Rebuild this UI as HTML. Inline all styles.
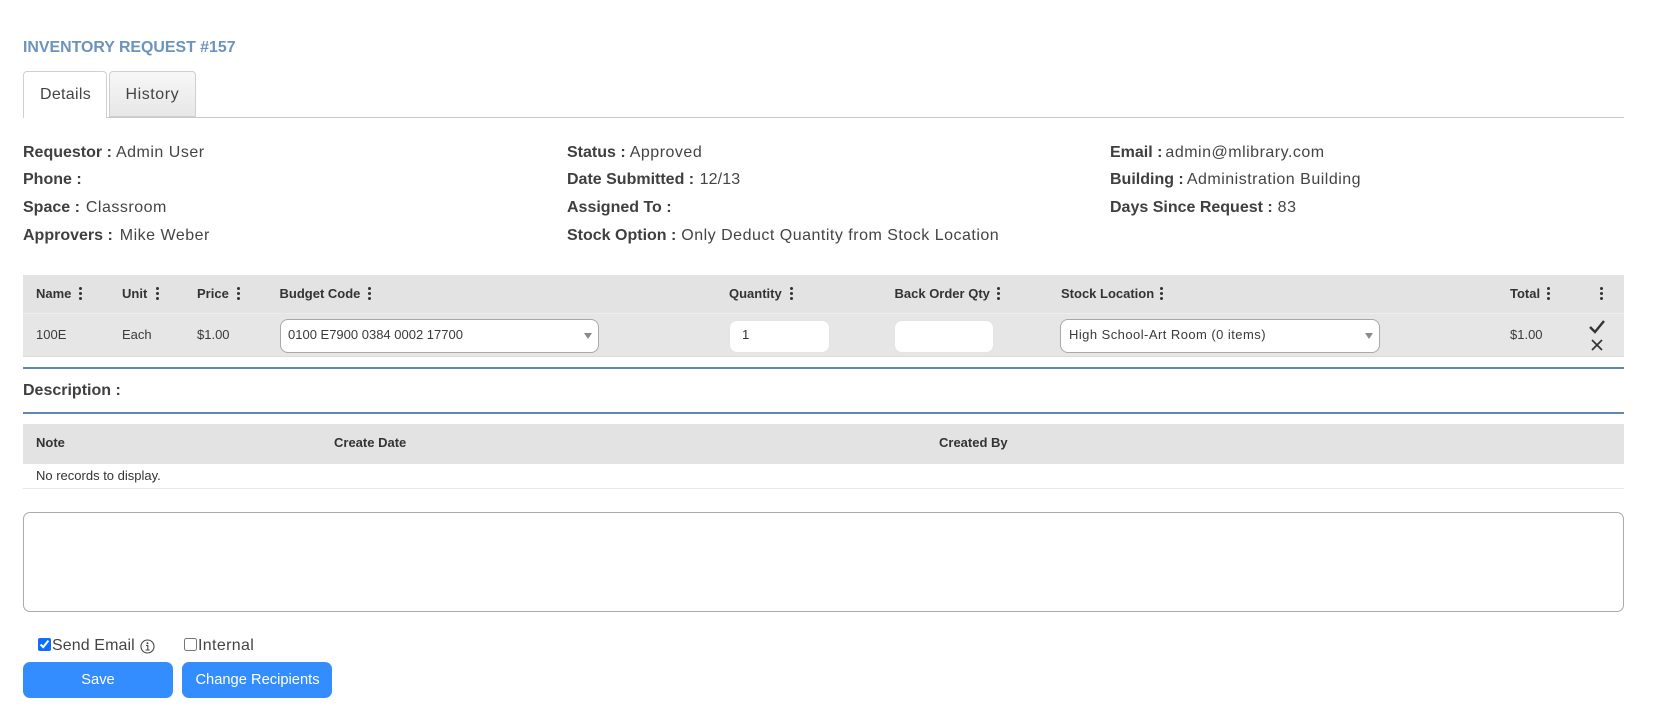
<!DOCTYPE html>
<html><head><meta charset="utf-8"><title>Inventory Request</title>
<style>
html,body{margin:0;padding:0;background:#fff;width:1654px;height:706px;overflow:hidden}
body{font-family:"Liberation Sans",sans-serif;color:#444;position:relative}
.a{position:absolute;white-space:nowrap}
.t{font-size:16px;line-height:20px;letter-spacing:.5px}
.t b{color:#3f3f3f;letter-spacing:0}
.h{font-size:13px;line-height:16px;font-weight:bold;color:#333}
.c{font-size:13px;line-height:16px;color:#3a3a3a}
.box{position:absolute;box-sizing:border-box;background:#fff}
.sel{border:1px solid #a8a8a8;border-radius:8px;height:34px;top:319px}
.inp{border:1px solid #e4e4e4;border-radius:8px;height:33px;top:320px}
.arrow{position:absolute;width:0;height:0;border-left:4px solid transparent;border-right:4px solid transparent;border-top:6px solid #8a8a8a;top:333px}
.dots{position:absolute;top:287px}
.dots i{display:block;width:3px;height:3px;border-radius:50%;background:#333;margin-bottom:2px}
.btn{position:absolute;top:662px;height:36px;background:#338dff;border-radius:7px;color:#fff;font-size:14.7px;line-height:36px;text-align:center}
</style></head><body>
<div class="a" style="left:23px;top:38px;font-size:15.9px;line-height:20px;font-weight:bold;color:#6a93bd">INVENTORY REQUEST #157</div>

<div class="box" style="left:23px;top:71px;width:84px;height:47px;border:1px solid #cfcfcf;border-bottom:0;border-radius:4px 4px 0 0;z-index:2"></div>
<div class="box" style="left:109px;top:71px;width:87px;height:46px;border:1px solid #cfcfcf;border-radius:4px 4px 0 0;background:linear-gradient(#f7f7f7,#e7e7e7)"></div>
<div class="a t" style="left:40px;top:85px;z-index:3;color:#444;letter-spacing:.3px">Details</div>
<div class="a t" style="left:125.5px;top:85px;color:#444;letter-spacing:.55px">History</div>
<div class="box" style="left:23px;top:117px;width:1601px;height:1px;background:#c9c9c9"></div>

<div class="a t" style="left:23px;top:143px"><b>Requestor :</b> Admin User</div>
<div class="a t" style="left:23px;top:170px"><b>Phone :</b></div>
<div class="a t" style="left:23px;top:198px"><b>Space :</b><span style="margin-left:1px"> Classroom</span></div>
<div class="a t" style="left:23px;top:226px"><b>Approvers :</b><span style="margin-left:7px">Mike Weber</span></div>
<div class="a t" style="left:567px;top:143px"><b>Status :</b> Approved</div>
<div class="a t" style="left:567px;top:170px"><b>Date Submitted :</b><span style="margin-left:1px;letter-spacing:.1px"> 12/13</span></div>
<div class="a t" style="left:567px;top:198px"><b>Assigned To :</b></div>
<div class="a t" style="left:567px;top:226px"><b>Stock Option :</b> Only Deduct Quantity from Stock Location</div>
<div class="a t" style="left:1110px;top:143px"><b>Email :</b><span style="margin-left:-2px"> admin@mlibrary.com</span></div>
<div class="a t" style="left:1110px;top:170px"><b>Building :</b><span style="margin-left:-1px"> Administration Building</span></div>
<div class="a t" style="left:1110px;top:198px"><b>Days Since Request :</b> 83</div>

<div class="box" style="left:23px;top:275px;width:1601px;height:38px;background:#e3e3e3"></div>
<div class="box" style="left:23px;top:313px;width:1601px;height:44px;background:#e6e6e6;border-top:1px solid #ececec;border-bottom:1px solid #dcdcdc"></div>

<div class="a h" style="left:36px;top:286px">Name</div><div class="dots" style="left:79px"><i></i><i></i><i></i></div>
<div class="a h" style="left:122px;top:286px">Unit</div><div class="dots" style="left:156px"><i></i><i></i><i></i></div>
<div class="a h" style="left:197px;top:286px">Price</div><div class="dots" style="left:237px"><i></i><i></i><i></i></div>
<div class="a h" style="left:279.5px;top:286px">Budget Code</div><div class="dots" style="left:368px"><i></i><i></i><i></i></div>
<div class="a h" style="left:729px;top:286px">Quantity</div><div class="dots" style="left:790px"><i></i><i></i><i></i></div>
<div class="a h" style="left:894.5px;top:286px">Back Order Qty</div><div class="dots" style="left:997px"><i></i><i></i><i></i></div>
<div class="a h" style="left:1061px;top:286px">Stock Location</div><div class="dots" style="left:1160px"><i></i><i></i><i></i></div>
<div class="a h" style="left:1510px;top:286px">Total</div><div class="dots" style="left:1547px"><i></i><i></i><i></i></div>
<div class="dots" style="left:1600px"><i></i><i></i><i></i></div>

<div class="a c" style="left:36px;top:327px">100E</div>
<div class="a c" style="left:122px;top:327px">Each</div>
<div class="a c" style="left:197px;top:327px">$1.00</div>
<div class="box sel" style="left:280px;width:319px"></div>
<div class="a c" style="left:288px;top:327px">0100 E7900 0384 0002 17700</div>
<div class="arrow" style="left:584px"></div>
<div class="box inp" style="left:729px;width:101px"></div>
<div class="a c" style="left:742px;top:327px;color:#333">1</div>
<div class="box inp" style="left:894px;width:100px"></div>
<div class="box sel" style="left:1060px;width:320px"></div>
<div class="a c" style="left:1069px;top:327px;letter-spacing:.45px">High School-Art Room (0 items)</div>
<div class="arrow" style="left:1365px"></div>
<div class="a c" style="left:1510px;top:327px">$1.00</div>
<svg class="a" style="left:1587px;top:318px" width="20" height="34" viewBox="0 0 20 34">
<path d="M3 9 L8 14 L17 3" fill="none" stroke="#333" stroke-width="2.4"/>
<path d="M5 22 L15 32 M15 22 L5 32" fill="none" stroke="#333" stroke-width="1.7"/>
</svg>

<div class="box" style="left:23px;top:367px;width:1601px;height:2px;background:#5f88b3"></div>
<div class="a t" style="left:23px;top:381px"><b>Description :</b></div>
<div class="box" style="left:23px;top:412px;width:1601px;height:2px;background:#5f88b3"></div>

<div class="box" style="left:23px;top:424px;width:1601px;height:40px;background:#e3e3e3"></div>
<div class="a h" style="left:36px;top:435px">Note</div>
<div class="a h" style="left:334px;top:435px">Create Date</div>
<div class="a h" style="left:939px;top:435px">Created By</div>
<div class="a" style="left:36px;top:468px;font-size:13px;line-height:16px;color:#333">No records to display.</div>
<div class="box" style="left:23px;top:488px;width:1601px;height:1px;background:#e8e8e8"></div>

<div class="box" style="left:23px;top:512px;width:1601px;height:100px;border:1px solid #ababab;border-radius:7px"></div>

<input type="checkbox" checked class="a" style="left:38px;top:638px;width:13px;height:13px;margin:0;accent-color:#0d6efd">
<div class="a t" style="left:52px;top:636px;letter-spacing:.1px">Send Email</div>
<svg class="a" style="left:140px;top:639px" width="15" height="15" viewBox="0 0 15 15">
<circle cx="7.5" cy="7.5" r="6.5" fill="none" stroke="#444" stroke-width="1.1"/>
<circle cx="7.5" cy="4.2" r="1" fill="#444"/>
<path d="M6 6.5H7.8V10.8M5.6 11H9.6" fill="none" stroke="#444" stroke-width="1.1"/>
</svg>
<input type="checkbox" class="a" style="left:184px;top:638px;width:13px;height:13px;margin:0">
<div class="a t" style="left:198px;top:636px;letter-spacing:.35px">Internal</div>

<div class="btn" style="left:23px;width:150px">Save</div>
<div class="btn" style="left:182px;width:150px;text-indent:1px">Change Recipients</div>
</body></html>
